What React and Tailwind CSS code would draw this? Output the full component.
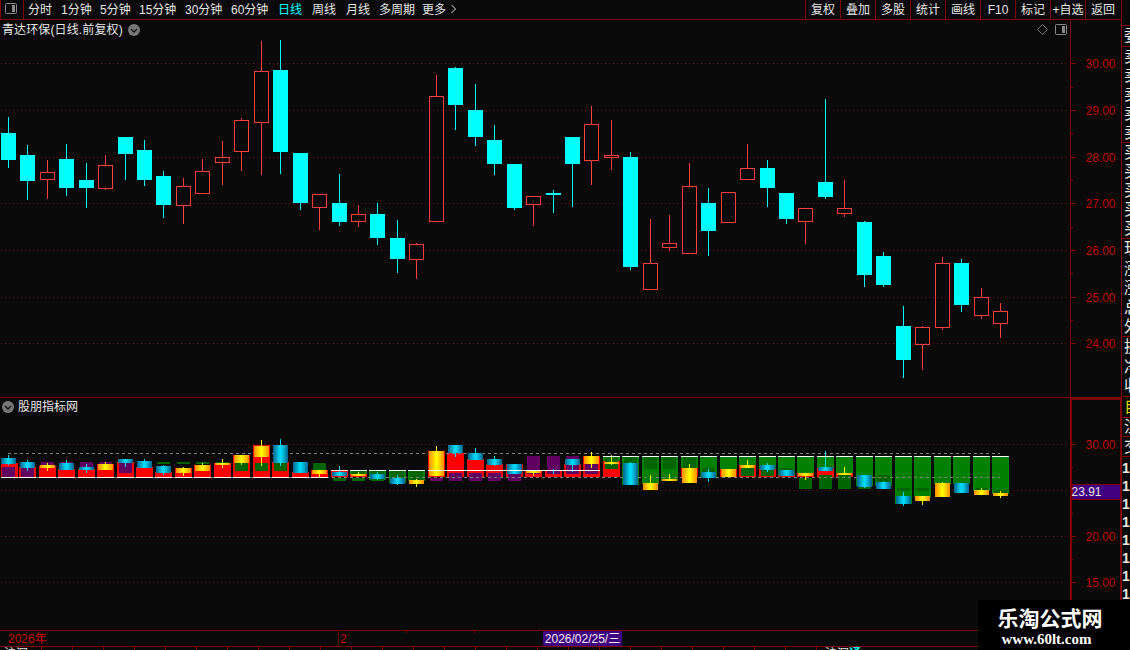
import React from "react";

const periods = [
  { label: "分时", width: "w-[33px]" },
  { label: "1分钟", width: "w-[39px]" },
  { label: "5分钟", width: "w-[39px]" },
  { label: "15分钟", width: "w-[46px]" },
  { label: "30分钟", width: "w-[46px]" },
  { label: "60分钟", width: "w-[47px]" },
  { label: "日线", width: "w-[34px]", active: true },
  { label: "周线", width: "w-[34px]" },
  { label: "月线", width: "w-[33px]" },
  { label: "多周期", width: "w-[43px]" },
  { label: "更多", width: "w-[28px]" },
];

const tools = ["复权", "叠加", "多股", "统计", "画线", "F10", "标记", "+自选", "返回"];

// [x, up, high, bodyTop, bodyBottom, low, bars]
// bars: [kind, top, bottom] with r = red, g = green, p = purple inner, d = dark green inner
const candles = [
  [1, 0, 117, 133, 160, 168, [["r", 463, 477], ["p", 467, 477]]],
  [20, 0, 145, 155, 181, 200, [["r", 467, 477], ["p", 468, 477]]],
  [40, 1, 160, 172, 180, 199, [["p", 462, 466], ["r", 466, 477]]],
  [59, 0, 144, 159, 188, 196, [["p", 462, 466], ["r", 469, 477]]],
  [79, 0, 163, 180, 188, 208, [["r", 469, 477], ["p", 462, 468]]],
  [98, 1, 155, 165, 189, 190, [["p", 462, 465], ["r", 464, 477]]],
  [118, 0, 137, 137, 154, 180, [["r", 462, 477], ["p", 463, 473]]],
  [137, 0, 140, 150, 180, 186, [["r", 467, 477]]],
  [156, 0, 171, 176, 205, 218, [["d", 462, 464], ["r", 472, 477]]],
  [176, 1, 178, 186, 206, 224, [["d", 462, 464], ["r", 468, 477]]],
  [195, 1, 159, 171, 194, 194, [["d", 462, 464], ["r", 465, 477]]],
  [215, 1, 141, 157, 163, 185, [["d", 462, 464], ["r", 463, 477]]],
  [234, 1, 118, 120, 152, 171, [["r", 455, 477], ["d", 463, 471]]],
  [254, 1, 41, 71, 123, 175, [["r", 445, 477], ["d", 463, 471]]],
  [273, 0, 40, 70, 152, 174, [["r", 462, 477], ["d", 463, 471]]],
  [293, 0, 153, 153, 203, 210, [["r", 472, 477]]],
  [312, 1, 194, 194, 208, 230, [["d", 463, 470], ["r", 470, 477]]],
  [332, 0, 174, 203, 222, 226, [["r", 471, 477], ["d", 478, 481]]],
  [351, 1, 205, 214, 222, 227, [["g", 471, 474], ["d", 471, 474], ["r", 474, 477], ["d", 478, 481]]],
  [370, 0, 203, 214, 238, 245, [["g", 471, 480], ["d", 471, 481]]],
  [390, 0, 220, 238, 259, 273, [["g", 471, 483], ["d", 471, 481]]],
  [409, 1, 243, 244, 260, 279, [["g", 471, 481], ["d", 471, 481]]],
  [429, 1, 75, 96, 222, 222, [["r", 451, 477], ["p", 478, 481]]],
  [448, 0, 67, 68, 105, 130, [["r", 453, 477], ["p", 473, 481]]],
  [468, 0, 84, 110, 137, 146, [["r", 459, 477], ["p", 473, 481]]],
  [487, 0, 125, 140, 164, 175, [["r", 464, 477], ["p", 473, 481]]],
  [507, 0, 164, 164, 208, 210, [["r", 464, 477], ["p", 474, 481]]],
  [526, 1, 196, 196, 205, 226, [["r", 471, 477], ["p", 456, 474]]],
  [546, 0, 190, 193, 195, 213, [["r", 471, 477], ["p", 456, 474]]],
  [565, 0, 137, 137, 164, 207, [["r", 464, 477], ["p", 456, 474]]],
  [584, 1, 106, 124, 161, 185, [["r", 456, 477], ["p", 464, 474]]],
  [604, 1, 120, 155, 158, 170, [["g", 457, 461], ["r", 461, 477], ["d", 457, 469]]],
  [623, 0, 152, 157, 267, 270, [["g", 457, 485], ["d", 457, 469]]],
  [643, 1, 219, 263, 290, 290, [["g", 457, 484], ["d", 457, 469]]],
  [662, 1, 215, 243, 248, 251, [["g", 457, 481], ["d", 457, 469]]],
  [682, 1, 163, 186, 254, 254, [["g", 457, 468], ["r", 468, 477], ["d", 457, 469]]],
  [701, 0, 188, 203, 231, 256, [["g", 457, 477], ["d", 468, 473]]],
  [721, 1, 192, 192, 223, 223, [["g", 457, 469], ["r", 469, 477]]],
  [740, 1, 144, 168, 180, 180, [["g", 457, 465], ["r", 465, 477], ["d", 466, 476]]],
  [760, 0, 160, 168, 188, 207, [["g", 457, 469], ["r", 469, 477], ["d", 470, 476]]],
  [779, 0, 193, 193, 219, 224, [["g", 457, 475], ["r", 475, 477], ["d", 468, 471]]],
  [798, 1, 208, 208, 222, 244, [["g", 457, 473], ["r", 473, 477], ["d", 478, 489]]],
  [818, 0, 99, 182, 197, 199, [["g", 457, 468], ["r", 468, 477], ["d", 475, 489]]],
  [837, 1, 180, 208, 214, 217, [["g", 457, 473], ["r", 473, 477], ["d", 475, 489]]],
  [857, 0, 221, 222, 275, 287, [["g", 457, 486], ["d", 475, 489]]],
  [876, 0, 252, 256, 285, 287, [["g", 457, 486], ["d", 475, 489]]],
  [896, 0, 306, 326, 360, 378, [["g", 457, 504], ["d", 488, 491]]],
  [915, 1, 326, 327, 345, 370, [["g", 457, 497], ["d", 488, 491]]],
  [935, 1, 257, 263, 328, 330, [["g", 457, 484]]],
  [954, 0, 259, 263, 305, 312, [["g", 457, 484]]],
  [974, 1, 288, 297, 316, 319, [["g", 457, 491], ["d", 488, 491]]],
  [993, 1, 303, 311, 324, 338, [["g", 457, 494], ["d", 490, 493]]],
];

const barColors = { r: "#ff0000", g: "#008000", p: "#600060", d: "#006400" };

const priceTicks = [
  { y: 63, label: "30.00" },
  { y: 110, label: "29.00" },
  { y: 157, label: "28.00" },
  { y: 203, label: "27.00" },
  { y: 250, label: "26.00" },
  { y: 297, label: "25.00" },
  { y: 343, label: "24.00" },
];

const subTicks = [
  { y: 444, label: "30.00" },
  { y: 490 },
  { y: 536, label: "20.00" },
  { y: 582, label: "15.00" },
];

const quoteRows = [
  { t: "委", h: "h-[21px]", line: true },
  { t: "卖", h: "h-[19px]" },
  { t: "卖", h: "h-[19px]" },
  { t: "卖", h: "h-[19px]" },
  { t: "卖", h: "h-[19px]" },
  { t: "卖", h: "h-[20px]", line: true },
  { t: "买", h: "h-[19px]" },
  { t: "买", h: "h-[19px]" },
  { t: "买", h: "h-[19px]" },
  { t: "买", h: "h-[19px]" },
  { t: "买", h: "h-[20px]", line: true },
  { t: "现", h: "h-[20px]" },
  { t: "涨", h: "h-[19px]" },
  { t: "涨", h: "h-[20px]" },
  { t: "总", h: "h-[19px]" },
  { t: "外", h: "h-[20px]", line: true },
  { t: "换", h: "h-[20px]" },
  { t: "净", h: "h-[19px]" },
  { t: "收", h: "h-[21px]", line: true },
  { t: "自", h: "h-[21px]", line: true, color: "text-[#d8d800]" },
  { t: "注", h: "h-[19px]", line: true },
  { t: "交", h: "h-[20px]", line: true },
];

// price panel y -> indicator panel y
const toSub = (y) => Math.round(444 + (y - 63) * 0.1971);

const ChevronBadge = ({ className }) => (
  <svg width="12" height="12" viewBox="0 0 12 12" className={className}>
    <circle cx="6" cy="6" r="6" fill="#777" />
    <path d="M3 5l3 3 3-3" fill="none" stroke="#111" strokeWidth="1.4" />
  </svg>
);

const PanelIcon = ({ className }) => (
  <svg width="12" height="11" viewBox="0 0 12 11" className={className}>
    <rect x="0.5" y="0.5" width="11" height="10" rx="1" fill="none" stroke="#888" />
    <rect x="7" y="2" width="3" height="7" fill="#888" />
  </svg>
);

const Grid = ({ ticks }) =>
  ticks.map(({ y }) => (
    <line key={y} x1="1" x2="1067" y1={y + 0.5} y2={y + 0.5} stroke="#5c0f0f" strokeDasharray="1 3" />
  ));

const Axis = ({ ticks }) =>
  ticks.map(({ y, label }) => (
    <g key={y}>
      <line x1="1071" x2="1076" y1={y + 0.5} y2={y + 0.5} stroke="#800000" />
      {label && (
        <text x="1085.5" y={y + 5} fontSize="12" fill="#c00000">
          {label}
        </text>
      )}
    </g>
  ));

const PriceChart = () => (
  <svg width="1121" height="377" viewBox="0 20 1121 377" shapeRendering="crispEdges" className="block">
    <Grid ticks={priceTicks} />
    {candles.map(([x, up, hi, top, bottom, lo]) => {
      const color = up ? "#ff3c3c" : "#00ffff";
      return (
        <g key={x}>
          <rect x={x + 7} y={hi} width="1" height={top - hi} fill={color} />
          <rect x={x + 7} y={bottom} width="1" height={lo - bottom} fill={color} />
          {up ? (
            <rect x={x + 0.5} y={top + 0.5} width="14" height={bottom - top - 1} fill="none" stroke={color} />
          ) : (
            <rect x={x} y={top} width="15" height={bottom - top} fill={color} />
          )}
        </g>
      );
    })}
    <line x1="1070.5" x2="1070.5" y1="20" y2="397" stroke="#800000" />
    <Axis ticks={priceTicks} />
    {[87, 133, 180, 227, 273, 320].map((y) => (
      <rect key={y} x="1071" y={y} width="2" height="1" fill="#800000" />
    ))}
  </svg>
);

const IndicatorChart = () => (
  <svg width="1121" height="214" viewBox="0 416 1121 214" shapeRendering="crispEdges" className="block">
    <defs>
      <linearGradient id="down">
        <stop offset="0" stopColor="#00628c" />
        <stop offset="0.5" stopColor="#00e6ff" />
        <stop offset="1" stopColor="#00628c" />
      </linearGradient>
      <linearGradient id="up">
        <stop offset="0" stopColor="#ff8c00" />
        <stop offset="0.5" stopColor="#ffff00" />
        <stop offset="1" stopColor="#ff8c00" />
      </linearGradient>
    </defs>
    <Grid ticks={subTicks} />
    {candles.map(([x, , , , , , bars]) =>
      bars.map(([kind, top, bottom], i) => {
        const inner = kind === "p" || kind === "d";
        return (
          <rect
            key={`${x}-${i}`}
            x={inner ? x + 1 : Math.max(x - 1, 1)}
            y={top}
            width={inner ? 13 : 17}
            height={bottom - top}
            fill={barColors[kind]}
          />
        );
      })
    )}
    <line x1="8" x2="1000" y1="453.5" y2="453.5" stroke="#808080" strokeDasharray="3 3" />
    <line x1="332" x2="1000" y1="477.5" y2="477.5" stroke="#808080" strokeDasharray="3 3" />
    <line x1="1" x2="329" y1="477.5" y2="477.5" stroke="#808080" />
    {candles.map(([x, up, hi, top, bottom, lo], i) => {
      const y1 = toSub(top);
      const y2 = toSub(bottom) + 1;
      return (
        <g key={x}>
          <rect x={x} y={y1} width="15" height={y2 - y1} fill={up ? "url(#up)" : "url(#down)"} />
          <rect
            x={x + 7}
            y={toSub(hi)}
            width="1"
            height={Math.max(toSub(lo) - toSub(hi), 1)}
            fill={up ? "#ffff00" : "#00d8ff"}
          />
          <rect
            x={Math.max(x - 1, 1)}
            y={i < 17 ? 477 : i < 31 ? 470 : 456}
            width={i > 21 && i < 30 ? 20 : 17}
            height="1"
            fill="#fff"
          />
        </g>
      );
    })}
  </svg>
);

const IndicatorAxis = () => (
  <svg width="51" height="232" viewBox="1070 398 51 232" shapeRendering="crispEdges" className="block">
    <rect x="1071" y="399" width="50" height="240" fill="none" stroke="#800000" strokeWidth="2" />
    <Axis ticks={subTicks} />
    {[467, 513, 559, 605].map((y) => (
      <rect key={y} x="1072" y={y} width="1" height="1" fill="#800000" />
    ))}
    <rect x="1072" y="484.5" width="48" height="15" fill="#400080" stroke="#800000" />
    <text x="1071.5" y="496" fontSize="12" fill="#e8e8e8">
      23.91
    </text>
  </svg>
);

const App = () => {
  return (
    <div className="relative flex h-[650px] w-[1130px] overflow-hidden bg-[#0a0a0a] font-['Liberation_Sans','Noto_Sans_CJK_SC',sans-serif] text-[12px] leading-none text-[#e6e6e6]">
      <main className="flex w-[1121px] shrink-0 flex-col">
        <header className="flex h-5 shrink-0 border-b border-[#800000]">
          <div className="flex w-6 shrink-0 border-x border-[#800000] pt-[3px] pl-1">
            <PanelIcon />
          </div>
          <nav className="flex flex-1 items-center pl-[4px]">
            {periods.map((p) => (
              <button
                key={p.label}
                className={`${p.width} text-left whitespace-nowrap ${p.active ? "text-[#00ffff]" : ""}`}
              >
                {p.label}
              </button>
            ))}
            <svg width="7" height="10" viewBox="0 0 7 10" className="mb-[2px]">
              <path d="M1.5 1l4 4-4 4" fill="none" stroke="#e6e6e6" />
            </svg>
          </nav>
          {tools.map((t) => (
            <button
              key={t}
              className="w-[35px] border-l border-[#800000] text-center whitespace-nowrap last:w-[36px] last:pr-px"
            >
              {t}
            </button>
          ))}
        </header>

        <section className="grid h-[377px] shrink-0 grid-cols-1 grid-rows-1">
          <div className="col-start-1 row-start-1">
            <PriceChart />
          </div>
          <div className="col-start-1 row-start-1 flex h-[19px] items-center pl-[2px]">
            <span className="tracking-[0.12px] whitespace-nowrap">青达环保(日线.前复权)</span>
            <ChevronBadge className="ml-[5px]" />
            <svg width="11" height="11" viewBox="0 0 11 11" className="mr-[7px] ml-auto">
              <path d="M5.5 0.5l5 5-5 5-5-5z" fill="none" stroke="#777" />
            </svg>
            <PanelIcon className="mr-[54px]" />
          </div>
        </section>

        <section className="grid h-[233px] shrink-0 grid-cols-1 grid-rows-1 border-t border-[#800000]">
          <div className="col-start-1 row-start-1 flex flex-col">
            <div className="flex h-[18px] items-center pl-[2px]">
              <ChevronBadge />
              <span className="ml-[4px]">股朋指标网</span>
            </div>
            <IndicatorChart />
          </div>
          <div className="col-start-1 row-start-1 justify-self-end">
            <IndicatorAxis />
          </div>
        </section>

        <footer className="flex h-[17px] shrink-0 items-center border-y border-[#800000] text-[#c80000]">
          <span className="w-[338px] pl-2">2026年</span>
          <div className="flex h-full w-[68px] items-center border-l border-[#5a0000] pl-px">2</div>
          <i className="h-[2px] w-[68px] self-start border-l border-[#800000]" />
          <i className="h-[2px] w-[69px] self-start border-l border-[#800000]" />
          <div className="flex h-full w-[79px] items-center justify-center bg-[#400080] whitespace-nowrap text-[#f0f0f0]">
            2026/02/25/三
          </div>
        </footer>
        <div className="flex h-[3px] overflow-hidden">
          <span className="w-[42px] border-r border-[#800000] pt-px pl-1">沪深</span>
          {Array.from({ length: 25 }, (_, i) => (
            <i key={i} className="w-[31px] shrink-0 border-r border-[#800000]" />
          ))}
          <span className="shrink-0 pt-px pl-2">沪深<b className="text-[#00ffff]">通</b></span>
        </div>
      </main>

      <aside className="flex w-[9px] shrink-0 flex-col overflow-hidden border-l border-[#800000] text-[16px]">
        <div className="h-[6px] shrink-0" />
        <div className="h-[20px] shrink-0 border-b border-[#800000]" />
        {quoteRows.map((r, i) => (
          <div
            key={i}
            className={`flex shrink-0 items-center pl-[2px] ${r.h} ${r.color || ""} ${r.line ? "border-b border-[#800000]" : ""}`}
          >
            {r.t}
          </div>
        ))}
        <div className="flex shrink-0 flex-col pt-[2px]">
          {Array.from({ length: 8 }, (_, i) => (
            <div key={i} className="flex h-[18px] items-center text-[14px] font-bold">
              1
            </div>
          ))}
        </div>
      </aside>

      <div className="absolute right-0 bottom-0 flex h-[50px] w-[152px] flex-col items-center bg-black pt-[7px] pr-[8px] text-white">
        <span className="text-[21px] leading-[23px] font-bold">乐淘公式网</span>
        <span className="pr-[7px] font-['Liberation_Serif',serif] text-[15px] leading-[18px] font-bold">www.60lt.com</span>
      </div>
    </div>
  );
};

export default App;
